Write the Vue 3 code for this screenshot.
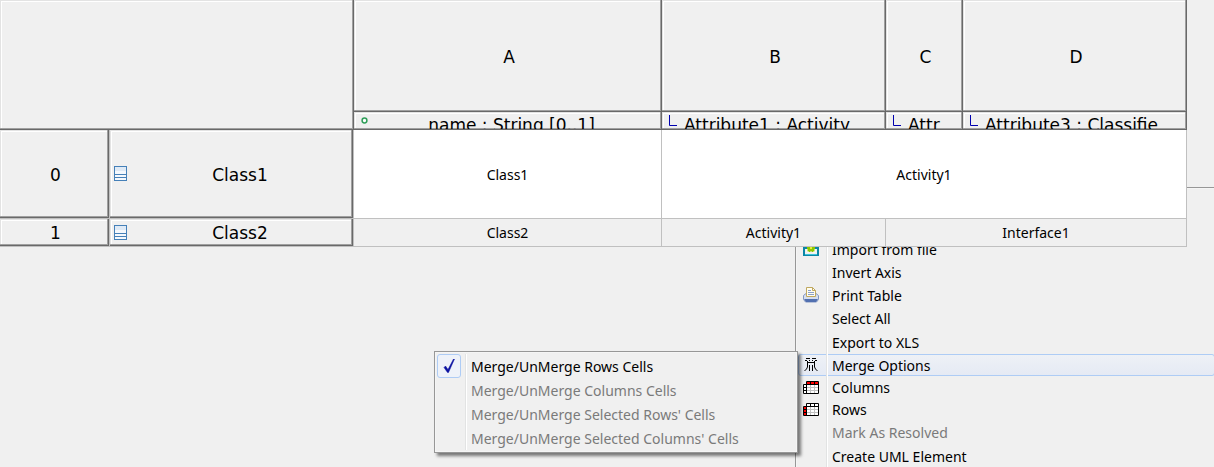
<template>
  <main class="editor">
    <table class="grid">
      <colgroup>
        <col class="col-index">
        <col class="col-label">
        <col class="col-a">
        <col class="col-b">
        <col class="col-c">
        <col>
      </colgroup>
      <thead>
        <tr class="letters">
          <td class="corner" colspan="2" rowspan="2"></td>
          <th v-for="c in columns" :key="c.letter" scope="col">{{ c.letter }}</th>
        </tr>
        <tr class="names">
          <th v-for="c in columns" :key="c.letter" scope="col">
            <div class="name" :class="c.kind">
              <svg v-if="c.kind === 'property'" width="12" height="12" viewBox="0 0 12 12">
                <circle cx="4.500" cy="5.500" r="2.400" fill="#fff" stroke="#2e9e58" stroke-width="1.500" />
              </svg>
              <svg v-else width="12" height="12" viewBox="0 0 12 12">
                <path d="M1.5 0v10.5H9" fill="none" stroke="#0000b0" />
              </svg>
              <span>{{ c.name }}</span>
            </div>
          </th>
        </tr>
      </thead>
      <tbody>
        <tr v-for="(row, i) in rows" :key="row.label" :class="i === 0 ? 'tall' : 'short'">
          <th class="head" scope="row">
            <div class="box"><span class="caption">{{ i }}</span></div>
          </th>
          <th class="head" scope="row">
            <div class="box labelled">
              <svg class="class-icon" width="13" height="15" viewBox="0 0 13 15">
                <rect x=".5" y=".5" width="12" height="14" fill="#f4f8fd" stroke="#4580b8" />
                <rect x="1" y="1" width="11" height="4" fill="#dfeaf6" />
                <path d="M1 8.5h11M1 11.5h11" stroke="#4580b8" />
              </svg>
              <span class="caption">{{ row.label }}</span>
            </div>
          </th>
          <td v-for="cell in row.cells" :key="cell.text" :colspan="cell.span">{{ cell.text }}</td>
        </tr>
      </tbody>
    </table>

    <ul class="menu context">
      <li v-for="item in items" :key="item.text">
        <button type="button" :class="{ slim: item.icon, active: item.active }" :disabled="item.disabled">
          <span class="icon">
            <svg v-if="item.icon === 'import'" width="16" height="16" viewBox="0 0 16 16">
              <path d="M4 7H1v7h14V7h-3" fill="none" stroke="#0b86a6" stroke-width="2" />
              <path d="M2 13.5h12" stroke="#3cc4d8" />
              <path d="M6 1h4v5h2v5H9l-1-1-1 1H4V6h2z" fill="#8cc800" />
              <path d="M7 4h2v4H7z" fill="#e4ec40" />
              <path d="M4 8v3h2M12 8v3h-2" fill="none" stroke="#fff" />
            </svg>
            <svg v-else-if="item.icon === 'print'" width="16" height="16" viewBox="0 0 16 16">
              <path d="M3 6.5.500 8.500v4L2.500 15h11l2-2.500v-4L13 6.500z" fill="#d5def0" stroke="#8296c2" />
              <path d="M1 12h14l-2 3H3z" fill="#5270b0" />
              <path d="M3.500 9.500v-9h6l3 3v6z" fill="#fffdf0" stroke="#c0a860" />
              <path d="M9.500.500v3h3" fill="none" stroke="#c0a860" />
              <path d="M5 3.500h3M5 5.500h6M5 7.500h6" stroke="#8ca0c8" />
            </svg>
            <svg v-else-if="item.icon === 'merge'" width="16" height="16" viewBox="0 0 16 16" fill="none" stroke="#000">
              <path d="M3 1.500h4M9 1.500h4M2 3.500h2M6 3.500h1M9 3.500h1M12 3.500h2M4.500 4v4M11.500 4v4M5 5.500h6M4.500 8v2l-1 2-2 2M6.500 8v6M9.500 8v6M11.500 8v2l1 2 2 2" />
            </svg>
            <svg v-else-if="item.icon" class="table-icon" width="16" height="13" viewBox="0 0 16 13">
              <path fill="#fff" d="M0 4h3V0h13v13H0z" />
              <path d="M4 6.500h11M4 9.500h11M7.500 4v8M11.500 4v8" stroke="#c0c0c0" />
              <path v-if="item.icon === 'columns'" d="M4 1h11v3H4z" fill="#f00" />
              <path v-else d="M1 4h3v8H1z" fill="#f00" />
              <path d="M3.500 12.500V.5h12v12H.5v-9h15M.5 6.500h3M.5 9.500h3M7.500 1v3M11.500 1v3" fill="none" stroke="#000" />
            </svg>
          </span>
          <span class="text">{{ item.text }}</span>
        </button>
      </li>
    </ul>

    <ul class="menu sub">
      <li v-for="(text, i) in mergeItems" :key="text">
        <button type="button" :disabled="i > 0">
          <span class="icon">
            <span v-if="i === 0" class="check">
              <svg width="12" height="14" viewBox="0 0 12 14">
                <path d="M1 8.500 2.500 7 5 10.500 10.500 0h1L5.500 13.500h-1z" fill="#0c12a1" stroke="#0c12a1" stroke-width=".5" />
              </svg>
            </span>
          </span>
          <span class="text">{{ text }}</span>
        </button>
      </li>
    </ul>
  </main>
</template>

<script setup>
const columns = [
  { letter: 'A', name: 'name : String [0..1]', kind: 'property' },
  { letter: 'B', name: 'Attribute1 : Activity', kind: 'attribute' },
  { letter: 'C', name: 'Attr', kind: 'attribute' },
  { letter: 'D', name: 'Attribute3 : Classifie', kind: 'attribute' }
]

const rows = [
  { label: 'Class1', cells: [{ text: 'Class1', span: 1 }, { text: 'Activity1', span: 3 }] },
  {
    label: 'Class2',
    cells: [{ text: 'Class2', span: 1 }, { text: 'Activity1', span: 1 }, { text: 'Interface1', span: 2 }]
  }
]

const items = [
  { text: 'Import from file', icon: 'import' },
  { text: 'Invert Axis' },
  { text: 'Print Table', icon: 'print' },
  { text: 'Select All' },
  { text: 'Export to XLS' },
  { text: 'Merge Options', icon: 'merge', active: true },
  { text: 'Columns', icon: 'columns' },
  { text: 'Rows', icon: 'rows' },
  { text: 'Mark As Resolved', disabled: true },
  { text: 'Create UML Element' }
]

const mergeItems = [
  'Merge/UnMerge Rows Cells',
  'Merge/UnMerge Columns Cells',
  "Merge/UnMerge Selected Rows' Cells",
  "Merge/UnMerge Selected Columns' Cells"
]
</script>

<style>
body {
  margin: 0;
  background: #f0f0f0;
}
</style>

<style scoped>
.editor {
  position: relative;
  box-sizing: border-box;
  height: 100vh;
  padding-right: 27px;
  overflow: hidden;
  background: #f0f0f0;
  color: #000;
  font-family: "Noto Sans", "Open Sans", sans-serif;
  font-size: 14px;
}
.grid {
  position: relative;
  z-index: 1;
  width: 100%;
  table-layout: fixed;
  border-collapse: separate;
  border-spacing: 0;
  background: #f0f0f0;
}
.col-index { width: 110px; }
.col-label { width: 244px; }
.col-a { width: 308px; }
.col-b { width: 224px; }
.col-c { width: 77px; }
.grid th,
.grid td {
  box-sizing: border-box;
  padding: 0;
  text-align: center;
  vertical-align: middle;
}
.grid th {
  font-family: "DejaVu Sans", Verdana, sans-serif;
  font-size: 17px;
  font-weight: 400;
}
/* raised edge of the header cells */
.corner,
thead th,
.box {
  border-right: 1px solid #696969;
  border-bottom: 1px solid #696969;
  box-shadow: inset -1px -1px #a0a0a0, inset 1px 1px #e3e3e3, inset 2px 2px #fff;
}
.letters { height: 112px; }
.grid .letters th { padding: 2px 0 0 3px; }
.names { height: 18px; }
.name {
  position: relative;
  height: 17px;
  overflow: hidden;
  line-height: 26px;
  white-space: nowrap;
}
.name.property { padding-left: 8px; }
.name.attribute {
  padding-left: 22px;
  text-align: left;
}
.name svg {
  position: absolute;
  left: 6px;
  top: 3px;
}
.box {
  position: relative;
  display: flex;
  align-items: center;
  justify-content: center;
  box-sizing: border-box;
  padding-left: 3px;
}
.box.labelled { padding-left: 18px; }
.caption { padding-top: 2px; }
.tall .box { height: 88px; }
.short .box { height: 27px; }
.class-icon {
  position: absolute;
  left: 4px;
}
.tall { height: 89px; }
.short { height: 28px; }
tbody .head,
tbody td {
  border-right: 1px solid #c0c0c0;
  border-bottom: 1px solid #c0c0c0;
}
.tall td { background: #fff; }

.menu {
  position: absolute;
  box-sizing: border-box;
  margin: 0;
  list-style: none;
  border: 1px solid #979797;
  background: #f0f0f0;
  box-shadow: inset 0 0 0 1px #f5f5f5;
}
.menu button {
  display: flex;
  align-items: center;
  box-sizing: border-box;
  width: 100%;
  height: 24px;
  padding: 0;
  border: 1px solid transparent;
  background: none;
  color: #000;
  font: inherit;
  text-align: left;
  white-space: nowrap;
}
.menu button.slim { height: 22px; }
.menu button.active {
  border-color: #aeccf5;
  border-radius: 3px;
  background: linear-gradient(#eef1f6, #e5eaf4);
}
.menu button:disabled { color: #7a7a7a; }
.icon {
  display: flex;
  align-items: center;
  width: 28px;
}
.text { padding-left: 5px; }
/* groove between the icons and the labels */
.menu::before {
  content: "";
  position: absolute;
  top: 2px;
  bottom: 2px;
  left: 30px;
  width: 1px;
  border-right: 1px solid #fff;
  background: #e2e3e3;
}
.context {
  top: 187px;
  left: 795px;
  right: -4px;
  padding: 50px 2px 2px;
}
.context .icon {
  box-sizing: border-box;
  padding-left: 4px;
}
.table-icon { margin-top: 1px; }
.sub {
  z-index: 2;
  top: 351px;
  left: 434px;
  width: 364px;
  padding: 2px;
  box-shadow: inset 0 0 0 1px #f5f5f5, 3px 3px 3px rgba(0, 0, 0, 0.5);
}
.check {
  display: flex;
  align-items: center;
  justify-content: center;
  box-sizing: border-box;
  width: 24px;
  height: 24px;
  margin-left: -1px;
  border: 1px solid #aeccf5;
  border-radius: 3px;
  background: #eef2f9;
}
</style>
